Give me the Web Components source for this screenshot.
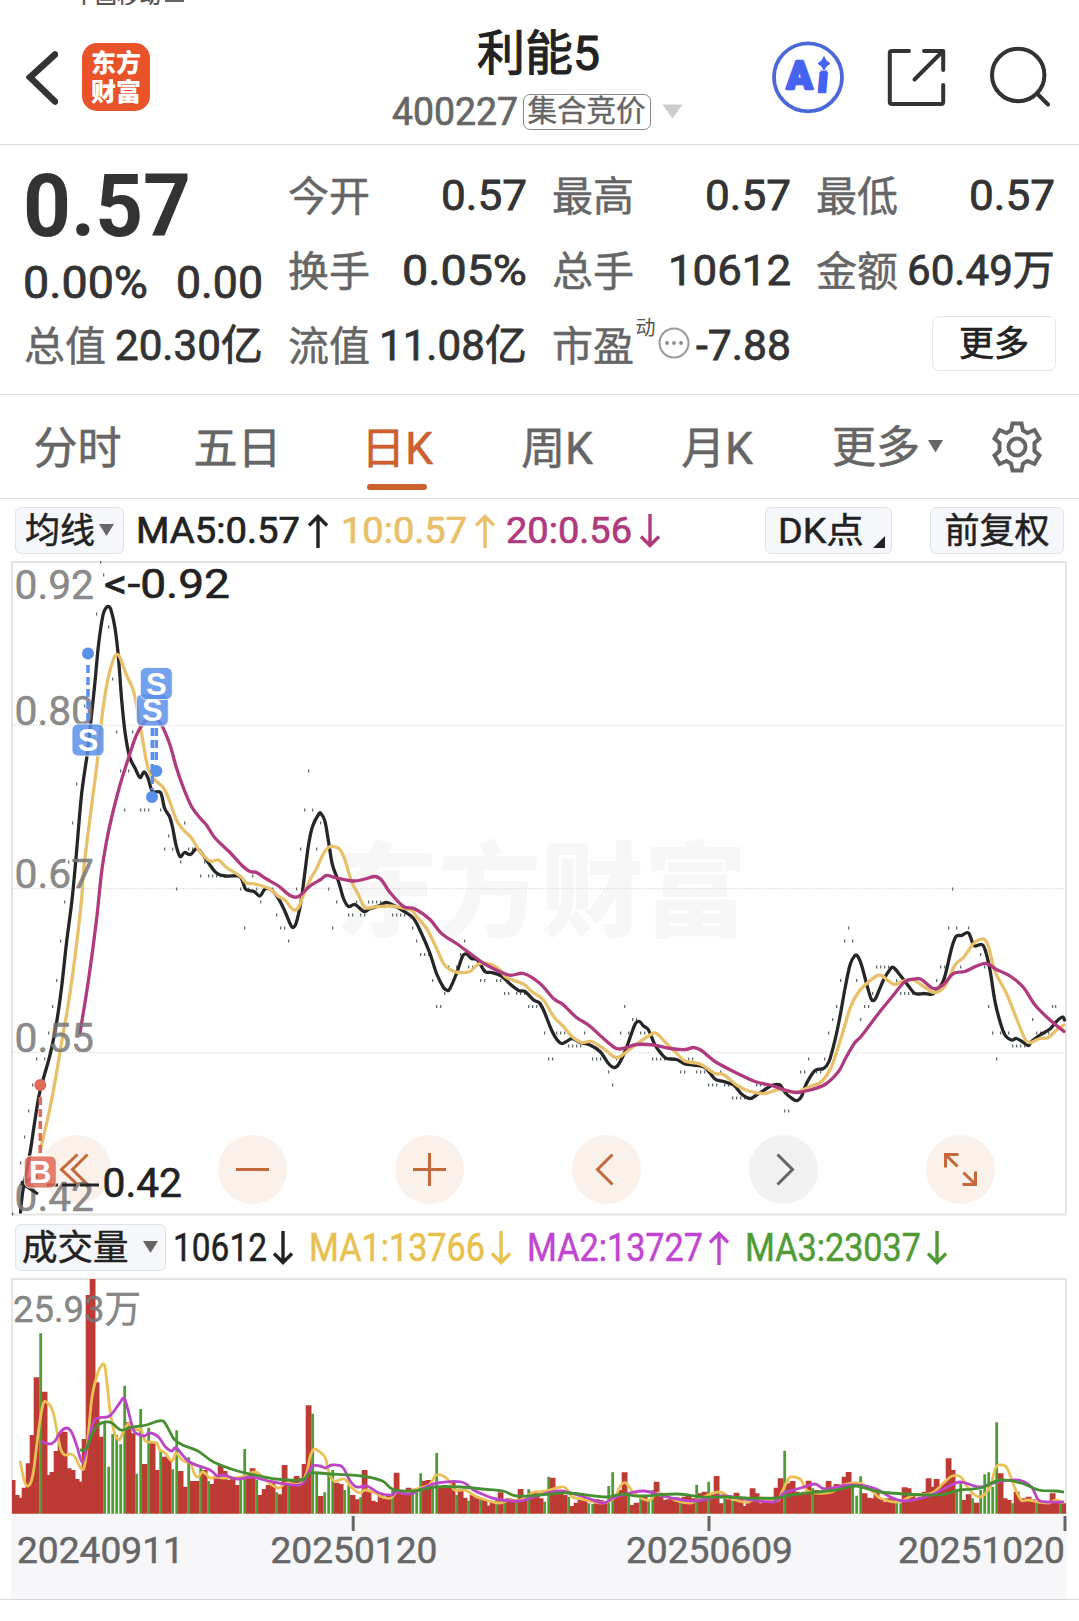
<!DOCTYPE html>
<html lang="zh-CN">
<head>
<meta charset="utf-8">
<title>利能5 400227</title>
<style>
  body {
    margin: 0;
    background: #fff;
    color: #333;
    font-family: Roboto, "Noto Sans CJK SC", sans-serif;
    font-weight: 500;
  }
</style>
</head>
<body>
<stock-page></stock-page>

<script>
// small helper: open shadow root filled from a template
function attachTemplate (host, html) {
  const template = document.createElement('template');
  template.innerHTML = html;
  host.attachShadow({ mode: 'open' });
  host.shadowRoot.appendChild(template.content.cloneNode(true));
}

// smooth path through a flat list of x y values
function curve (data) {
  const n = data.trim().split(/[\s,]+/).map(Number);
  const p = [];
  for (let i = 0; i < n.length; i += 2) p.push([n[i], n[i + 1]]);
  let d = `M${p[0][0]} ${p[0][1]}`;
  for (let i = 0; i < p.length - 1; i++) {
    const a = p[i - 1] || p[i];
    const b = p[i];
    const c = p[i + 1];
    const e = p[i + 2] || c;
    d += `C${b[0] + (c[0] - a[0]) / 6} ${b[1] + (c[1] - a[1]) / 6} ${c[0] - (e[0] - b[0]) / 6} ${c[1] - (e[1] - b[1]) / 6} ${c[0]} ${c[1]}`;
  }
  return d;
}

// <fit-text width="86"> squeezes its text to the given width
class FitText extends HTMLElement {
  constructor () {
    super();
    attachTemplate(this, `
      <style>
        :host { display: inline-block; white-space: nowrap; flex: none; vertical-align: top; }
        span { display: inline-block; vertical-align: top; transform-origin: 0 50%; }
      </style><span><slot></slot></span>`);
  }

  connectedCallback () {
    const width = Number(this.getAttribute('width'));
    const span = this.shadowRoot.querySelector('span');
    const natural = span.getBoundingClientRect().width;
    this.style.width = width + 'px';
    if (natural) span.style.transform = `scaleX(${width / natural})`;
  }
}
customElements.define('fit-text', FitText);

// <trend-arrow dir="up|down">
class TrendArrow extends HTMLElement {
  constructor () {
    super();
    const down = this.getAttribute('dir') === 'down';
    attachTemplate(this, `
      <style>
        :host { display: block; flex: none; width: 22px; height: 34px; }
        svg { display: block; ${down ? 'transform: rotate(180deg);' : ''} }
      </style>
      <svg width="22" height="34" fill="none" stroke="currentColor" stroke-width="3.4">
        <path d="M11 34V2M2 11.5L11 2.5L20 11.5"/>
      </svg>
    `);
  }
}
customElements.define('trend-arrow', TrendArrow);

// <drop-button> grey pill with slotted label
class DropButton extends HTMLElement {
  constructor () {
    super();
    attachTemplate(this, `
      <style>
        :host {
          display: flex;
          align-items: center;
          box-sizing: border-box;
          flex: none;
          height: 47px;
          border: 1px solid #e0e3e6;
          border-radius: 6px;
          background: #f5f7fa;
          color: #222;
          line-height: 45px;
          padding-top: 2px;
        }
      </style>
      <slot></slot>
    `);
  }
}
customElements.define('drop-button', DropButton);

class AppHeader extends HTMLElement {
  constructor () {
    super();
    attachTemplate(this, `
      <style>
        :host { display: block; height: 144px; border-bottom: 1px solid #d8d8d8; }
        .status { height: 5px; overflow: hidden; padding-left: 73px; font-size: 22px; line-height: 22px; color: #555; display: flex; }
        .status span { margin-top: -15px; }
        .status i { width: 19px; height: 2px; margin-left: 4px; background: #666; }
        .bar { display: grid; grid-template-columns: 360px 354px 1fr; }
        .left { display: flex; padding: 38px 0 0 26px; }
        .logo {
          box-sizing: border-box; width: 68px; height: 68px; margin-left: 24px; padding-top: 6px;
          border-radius: 15px; background: #e9532a; color: #fff;
          font-size: 25px; font-weight: 900; line-height: 29px; text-align: center;
        }
        .mid { display: flex; flex-direction: column; align-items: center; padding-top: 18px; }
        .name { font-size: 48px; line-height: 62px; color: #222; padding-left: 3px; font-weight: 400; -webkit-text-stroke: 1.1px; }
        .sub { display: flex; align-items: center; height: 53px; padding-left: 1px; color: #666; font-size: 38px; }
        .sub fit-text { font-weight: 400; -webkit-text-stroke: .7px; }
        .tag {
          box-sizing: border-box; width: 128px; height: 36px; margin: 0 10px 0 5px;
          border: 1.5px solid #888; border-radius: 7px;
          font-size: 29.5px; line-height: 33px; text-align: center; font-weight: 400; -webkit-text-stroke: .4px;
        }
        .right { display: flex; padding: 36px 0 0 58px; gap: 42px; }
        svg { display: block; flex: none; }
      </style>
      <div class="status"><span>中国移动</span><i></i></div>
      <div class="bar">
        <div class="left">
          <svg width="32" height="68" viewBox="26 43 32 68" fill="none" stroke="#333" stroke-width="6.5" stroke-linecap="round"><path d="M55 54.5L30 77.3L55 101.5"/></svg>
          <div class="logo">东方<br>财富</div>
        </div>
        <div class="mid">
          <div class="name">利能5</div>
          <div class="sub">
            <fit-text width="126">400227</fit-text><div class="tag">集合竞价</div>
            <svg width="23" height="15"><path d="M1.5 .5H21.500L11.500 14.500Z" fill="#ccc"/></svg>
          </div>
        </div>
        <div class="right">
          <svg width="72" height="73" viewBox="772 41 72 73">
            <g fill="#4563f0" stroke="#4563f0" stroke-width="2.600" stroke-linejoin="round" font-weight="900" font-family="Roboto">
              <text x="786.500" y="89" font-size="38" textLength="26" lengthAdjust="spacingAndGlyphs">A</text>
              <text x="0" y="0" font-size="36" transform="translate(817 92) skewX(-5)">i</text>
            </g>
            <path d="M813 54H836V70.500H813Z" fill="#fff"/>
            <path d="M824 56.500Q825.500 61.500 830 63.500Q825.500 65.500 824 70Q822.500 65.500 818 63.500Q822.500 61.500 824 56.500Z" fill="#4563f0" stroke="#4563f0"/>
            <circle cx="808" cy="77.300" r="34" fill="none" stroke="#4a68d8" stroke-width="3.800"/>
          </svg>
          <svg width="61" height="73" viewBox="886 41 61 73" fill="none" stroke="#333" stroke-width="4" stroke-linecap="round" stroke-linejoin="round">
            <path d="M909 51H892Q889.800 51 889.800 53V102Q889.800 104 892 104H941Q943.200 104 943.200 102V85"/>
            <path d="M924 51H943.200V70M942 52L914.500 79.500"/>
          </svg>
          <svg width="61" height="73" viewBox="989 41 61 73" fill="none" stroke="#333" stroke-width="4" stroke-linecap="round">
            <circle cx="1018.200" cy="75" r="26.200"/><path d="M1037 93.500L1048 104.500"/>
          </svg>
        </div>
      </div>
    `);
  }
}
customElements.define('app-header', AppHeader);

// <quote-cell label="今开"> label on the left, slotted value on the right
class QuoteCell extends HTMLElement {
  constructor () {
    super();
    attachTemplate(this, `
      <style>
        :host { display: flex; justify-content: space-between; align-items: center; height: 75px; font-size: 42.5px; line-height: 75px; font-weight: 400; -webkit-text-stroke: .8px; }
        .label { padding-top: 4px; font-size: 41px; color: #666; -webkit-text-stroke: .5px #666; white-space: nowrap; }
      </style>
      <span class="label">${this.getAttribute('label')}</span><slot></slot>
    `);
  }
}
customElements.define('quote-cell', QuoteCell);

class QuotePanel extends HTMLElement {
  constructor () {
    super();
    attachTemplate(this, `
      <style>
        :host {
          display: grid; grid-template-columns: repeat(4, 239px); column-gap: 25px; align-content: start;
          box-sizing: border-box; height: 250px; padding: 13px 0 0 24px; border-bottom: 1px solid #d8d8d8;
        }
        .price { grid-row: span 2; padding-top: 4px; }
        .last { font-size: 87.5px; line-height: 89px; font-weight: 700; height: 88px; margin-left: -1px; }
        .change { display: flex; justify-content: space-between; margin-top: 12px; font-size: 43.5px; line-height: 44px; margin-left: -1px; font-weight: 400; -webkit-text-stroke: .8px; }
        .hint { display: flex; align-items: center; gap: 2px; height: 75px; margin-right: 5px; color: #777; -webkit-text-stroke: 0; }
        .hint sup { font-size: 20px; line-height: 20px; margin-top: -36px; color: #555; }
        .hint svg { margin: -5px 0 0; }
        .more {
          justify-self: end; box-sizing: border-box; width: 124px; height: 55px; margin: 8px -1px 0 0;
          border: 1.5px solid #e6e6e6; border-radius: 7px; font-size: 35px; line-height: 55px; text-align: center; color: #222;
          font-weight: 400; -webkit-text-stroke: .7px;
        }
      </style>
      <div class="price">
        <div class="last"><fit-text width="168">0.57</fit-text></div>
        <div class="change"><fit-text width="125">0.00%</fit-text><fit-text width="87">0.00</fit-text></div>
      </div>
      <quote-cell label="今开"><fit-text width="86">0.57</fit-text></quote-cell>
      <quote-cell label="最高"><fit-text width="86">0.57</fit-text></quote-cell>
      <quote-cell label="最低"><fit-text width="86">0.57</fit-text></quote-cell>
      <quote-cell label="换手"><fit-text width="125">0.05%</fit-text></quote-cell>
      <quote-cell label="总手"><fit-text width="123">10612</fit-text></quote-cell>
      <quote-cell label="金额"><fit-text width="148">60.49万</fit-text></quote-cell>
      <quote-cell label="总值"><fit-text width="148">20.30亿</fit-text></quote-cell>
      <quote-cell label="流值"><fit-text width="148">11.08亿</fit-text></quote-cell>
      <quote-cell label="市盈">
        <span class="hint"><sup>动</sup>
          <svg width="32" height="32"><circle cx="16" cy="16" r="14.500" fill="none" stroke="#999" stroke-width="2"/><g fill="#888"><circle cx="9" cy="16" r="1.900"/><circle cx="16" cy="16" r="1.900"/><circle cx="23" cy="16" r="1.900"/></g></svg>
        </span>
        <fit-text width="95">-7.88</fit-text>
      </quote-cell>
      <div class="more">更多</div>
    `);
  }
}
customElements.define('quote-panel', QuotePanel);

class PeriodTabs extends HTMLElement {
  constructor () {
    super();
    attachTemplate(this, `
      <style>
        :host {
          display: flex; box-sizing: border-box; height: 104px; border-bottom: 1px solid #d8d8d8;
          font-size: 44px; line-height: 109px; color: #666; font-weight: 400; -webkit-text-stroke: .6px;
        }
        .tab { width: 160px; height: 103px; text-align: center; flex: none; box-sizing: border-box; padding-right: 5px; }
        .tab:nth-of-type(n+3) { padding-right: 6px; }
        .tab.on { color: #cc6130; position: relative; }
        .tab.on::after { content: ''; position: absolute; left: 47px; top: 89px; width: 60px; height: 6px; border-radius: 3px; background: #cc6130; }
        .more { margin-left: 32px; flex: none; display: flex; align-items: center; height: 103px; }
        .more span { padding-top: 3px; }
        .more svg { margin-left: 8px; }
        .gear { margin: 23px 0 0 45px; flex: none; }
      </style>
      <div class="tab">分时</div>
      <div class="tab">五日</div>
      <div class="tab on">日K</div>
      <div class="tab">周K</div>
      <div class="tab">月K</div>
      <div class="more"><span>更多</span><svg width="15" height="13"><path d="M0 0H15L7.500 12.500Z" fill="#666"/></svg></div>
      <svg class="gear" width="58" height="58" viewBox="-29 -29 58 58" fill="none" stroke="#666" stroke-width="4">
        <path d="M-4.500-23.500H4.500L6-16.500L10.500-14L17.500-17L22.500-8.500L17.500-4V4L22.500 8.500L17.500 17L10.500 14L6 16.500L4.500 23.500H-4.500L-6 16.500L-10.500 14L-17.500 17L-22.500 8.500L-17.500 4V-4L-22.500-8.500L-17.500-17L-10.500-14L-6-16.500Z"/>
        <circle r="8.500"/>
      </svg>
    `);
  }
}
customElements.define('period-tabs', PeriodTabs);

class MaLegend extends HTMLElement {
  constructor () {
    super();
    attachTemplate(this, `
      <style>
        :host { display: flex; align-items: center; height: 62px; padding-left: 15px; font-size: 37px; line-height: 62px; font-weight: 400; -webkit-text-stroke: .7px; }
        drop-button { font-size: 35px; font-weight: 400; -webkit-text-stroke: .5px; }
        .ma { width: 109px; padding-left: 9px; }
        .ma svg { margin: 0 0 2px 4px; }
        .dk { width: 127px; padding-left: 12px; margin-left: 104px; }
        .dk svg { align-self: flex-end; margin: 0 0 5px 9px; }
        .adj { width: 134px; margin-left: 38px; justify-content: center; }
        .item { display: flex; align-items: center; color: #222; margin-left: 12px; padding-top: 1px; }
        .item.v10 { color: #e8c06a; }
        .item.v20 { color: #b03a7e; margin-left: 10px; }
        .item trend-arrow { margin-left: 7px; }
      </style>
      <drop-button class="ma">均线<svg width="15" height="12"><path d="M0 0H15L7.500 12Z" fill="#666"/></svg></drop-button>
      <div class="item"><fit-text width="164">MA5:0.57</fit-text><trend-arrow dir="up"></trend-arrow></div>
      <div class="item v10"><fit-text width="126">10:0.57</fit-text><trend-arrow dir="up"></trend-arrow></div>
      <div class="item v20"><fit-text width="126">20:0.56</fit-text><trend-arrow dir="down"></trend-arrow></div>
      <drop-button class="dk"><fit-text width="86">DK点</fit-text><svg width="12" height="12"><path d="M12 0V12H0Z" fill="#222"/></svg></drop-button>
      <drop-button class="adj">前复权</drop-button>
    `);
  }
}
customElements.define('ma-legend', MaLegend);

// <round-tool> circle behind one chart control
class RoundTool extends HTMLElement {
  constructor () {
    super();
    attachTemplate(this, `
      <style>
        :host { display: block; width: 69px; height: 69px; border-radius: 50%; background: #faf1ea; color: #c4683a; }
        :host([muted]) { background: #f2f2f2; color: #666; }
        svg { display: block; }
      </style>
      <svg width="69" height="69" viewBox="-34.500 -34.500 69 69" fill="none" stroke="currentColor" stroke-width="3"><path d="${this.getAttribute('icon')}"/></svg>
    `);
  }
}
customElements.define('round-tool', RoundTool);

// closing price dots, one row per price level: y: x x x
const TICKS = `
562:101 575:104 614:97 627:109 679:113 706:85 732:117 133 771:121 129 309 784:77
810:125 141 145 149 161 305 313 823:73 185 321 836:169 849:165 173 189 193 301 317
862:69 181 205 876:201 209 213 217 221 225 253 889:177 241 249 257 273 297 329 953
902:65 261 337 357 369 373 377 381 915:277 349 353 361 365 393 397 401 405
928:245 281 285 333 413 849 949 957 969 941:61 289 417 465 845 853 954.500:421 425 429 461 981
967:449 457 469 473 877 881 885 889 941 945 961 985 980.500:57 433 481 485 497 501 841 857 897 937
993.500:445 505 509 517 521 525 873 901 905 909 913 1006.500:53 437 441 529 533 537 625 837 865 869 989 1053 1056
1019.500:633 637 833 861 1033 1033:49 545 557 561 565 585 621 629 641 645 829 993 1001 1005 1009 1037 1041 1045 1049
1046:569 573 577 581 1013 1017 1021 1025 1059:37 45 549 553 593 597 601 617 653 657 661 665 689 693 809 825 997
1072:609 681 685 697 701 705 721 801 805 817 821 1085:33 613 709 713 717 725 729 757 761 765
1098:733 737 741 745 1111:29 785 789 1137:25 1163:21 1214:13`;

const PRICE_MA5 = `20.5 1212 23 1190 30 1153 35 1120 40 1091 50 1055 56.500 1023 61.500 988 66.500 943 72 900 76 858 81.500 795 87.500 752
91.500 715 95 682 98.500 645 103 615 106 608 108.500 606.500 111 610 115 628 118.500 658 121.500 698 125 732 129.500 756.500 135 768 140 777.500 144 772
148 778 152.500 791.500 160.500 792.500 164.500 808 169.500 816.500 172.500 827 176 845 180 856.500 184.500 852.500 190.500 854.500 196.500 848.500 201.500 853
208.500 863 216.500 873 225 876 238.500 876 242.500 881 246 889.500 254 891.500 260 896 265 889 271.500 890 278.500 898.500 285 911.500 290 923.500
292.500 927.500 296 923.500 301 901.500 305 871.500 308.500 845 312.500 826.500 318.500 814.500 321 813.500 325 821.500 328.500 841.500 332.500 865 338.500 881.500
343.500 898.500 348.500 906.500 355 904.500 364 911.500 370 908.500 378.500 906 386 902.500 393 905 402 910 413.500 918.500 421.500 933.500 430 953.500 436.500 973.500
443.500 987.500 447.500 990.500 450 988.500 456.500 973.500 462.500 956.500 466.500 954 471.500 958.500 477.500 960 485 971.500 491.500 972.500 501.500 976 510 984
518.500 990.500 525 991.500 533.500 1000 539 1002.500 543.500 1010 551.500 1030 556.500 1039 561.500 1043.500 566.500 1041.500 572.500 1038.500 580 1042.500 590 1045
600 1051.500 608.500 1063.500 614 1067.500 618.500 1064.500 625 1051.500 631.500 1033.500 635.500 1023.500 639.500 1021.500 643.500 1026 648.500 1030 655 1045
661.500 1054 666.500 1058.500 676.500 1059.500 685 1064 693.500 1065 705 1067.500 715 1079 723.500 1081.500 733.500 1085 741.500 1094 750 1098.500 756.500 1095
766.500 1088.500 773 1085 780 1085 785 1092.500 793.500 1099.500 797.500 1100.500 801.500 1096.500 806.500 1083.500 815 1070.500 823.500 1068.500 829 1061.500 835 1040
840 1016.500 845 988.500 850 965 854.500 956 857.500 956 861.500 965 866.500 983.500 871 998.500 874 1000.500 876.500 996.500 883.500 980 890 969.500 893.500 967.500
900 975 908.500 986 915 993.500 924 993.500 933.500 993.500 942.500 982.500 946.500 970 951.500 948.500 956 936.500 961.500 935.500 966 933 969 933.500 972.500 942.500
975 946 981.500 944.500 985 949.500 990 970 995 1001.500 1000 1021.500 1005 1035 1011.500 1040 1016.500 1038.500 1023.500 1042.500 1028.500 1045.500 1031.500 1041.500
1040 1035 1050 1029 1056.500 1021.500 1062.500 1017 1064.500 1020`;

const PRICE_MA10 = `40 1152 50 1108 56.500 1073 61.500 1043 68.500 1003 75 957 81.500 900 83.500 871.500 90 818 96.500 768 100 735 103.500 705 108.500 676.500
113.500 659 116.500 654.500 120 657.500 126.500 675 132.500 688 136 702 141.500 733 146.500 762 150 773 155 780 163.500 788 168.500 798 176.500 820 183.500 830
191.500 838 200 851.500 210 861 218.500 860 226.500 867.500 240 876 246.500 883 255 884 270 889 278.500 896.500 285 900 290 906.500 294 910 298.500 907.500
303.500 895 310 880 316.500 868.500 323.500 853.500 328.500 847.500 333.500 846.500 339.500 849 345 860 351.500 881.500 358.500 895 365 907.500 373.500 907
390 906 400 907.500 411.500 910 416.500 916.500 426.500 928.500 435 945 443.500 963.500 450 969.500 458.500 972.500 470 971.500 478.500 964 490 964 500 970
506.500 977.500 523.500 984 531.500 991.500 543.500 1000 553.500 1016.500 563.500 1026.500 571.500 1036 581.500 1042.500 591.500 1041.500 603.500 1048.500
613.500 1056.500 620 1056.500 633.500 1046.500 650 1035 656.500 1033.500 666.500 1043.500 675 1051.500 685 1061 700 1064 715 1073.500 723.500 1074.500 736.500 1085
748.500 1091 765 1093.500 779 1089.500 796.500 1092 810 1086.500 821.500 1081.500 831.500 1066.500 841.500 1036.500 850 1008.500 856.500 995 865 985 876.500 976
881.500 975.500 888.500 981 895 984.500 903.500 981 913.500 980 926.500 988.500 935 992.500 945 986 955 965 963.500 957.500 973.500 943.500 980 939.500 984.500 939.500
988.500 946.500 995 971.500 1006.500 993.500 1018.500 1023.500 1025 1039 1030 1042.500 1040 1038.500 1048.500 1037.500 1056.500 1030 1064 1025`;

const PRICE_MA20 = `80 1033 88.500 980 96.500 920 101.500 873 106.500 841.500 111.500 818 120 785 129.500 755 136.500 735 145 721.500 153.500 718 161.500 725 170 745
176.500 768 183.500 788 191.500 806.500 200 818 206.500 825 215 838 230 852.500 241.500 865 250 871.500 256.500 872.500 266.500 879 278.500 886 290 895.500
298.500 896.500 310 886 320 880 326.500 875.500 336.500 878 353.500 881 365 879 375 876.500 381.500 880 390 892.500 403.500 906.500 415 909 430 919.500
441.500 933.500 456.500 943.500 473.500 956 486.500 965 508.500 975 523.500 973.500 540 983.500 553.500 998.500 563.500 1005 576.500 1017.500 588.500 1025
603.500 1038.500 616.500 1048.500 626.500 1047.500 636.500 1044.500 653.500 1045 670 1048.500 685 1049.500 693.500 1047.500 701.500 1050.500 715 1061.500
733.500 1071.500 755 1081.500 770 1085 785 1090 796.500 1092.500 810 1090 825 1084.500 838.500 1071.500 846.500 1056.500 855 1042.500 861.500 1036 878.500 1013.500
893.500 995 905 981.500 915 979 921.500 979.500 933.500 988.500 943.500 984.500 953.500 973.500 965 971.500 976.500 966 986.500 963.500 996.500 969.500 1010 976
1023.500 987.500 1035 1005 1050 1020 1064 1031.500`;

class PriceChart extends HTMLElement {
  constructor () {
    super();
    let ticks = '';
    let y = 0;
    TICKS.trim().split(/\s+/).forEach(part => {
      const [a, b] = part.split(':');
      if (b) y = Number(a);
      ticks += `M${Number(b || a) - 0.3} ${y - 1.5}v3`;
    });
    const marker = (x, my, letter, fill) => `
      <rect x="${x - 16}" y="${my - 16}" width="32" height="32" rx="6" fill="${fill}" fill-opacity=".85" stroke="#fff" stroke-opacity=".8"/>
      <text x="${x}" y="${my + 11}" text-anchor="middle" font-size="31" font-weight="700" font-family="Liberation Sans" fill="#fff">${letter}</text>`;
    const label = (ly, text) => `<text x="14.500" y="${ly}" textLength="79.500" lengthAdjust="spacingAndGlyphs">${text}</text>`;

    attachTemplate(this, `
      <style>
        :host { display: block; position: relative; height: 655px; }
        svg { display: block; position: relative; }
        .tools { position: absolute; left: 41.5px; top: 574px; display: flex; gap: 107.9px; }
      </style>
      <div class="tools">
        <round-tool icon="M1-15L-15 0L1 15M11-15L-4 0L11 15"></round-tool>
        <round-tool icon="M-16.500 0H16.500"></round-tool>
        <round-tool icon="M-16.500 0H16.500M0-16.500V16.500"></round-tool>
        <round-tool icon="M6-15L-9 0L6 15"></round-tool>
        <round-tool muted icon="M-6-15L9 0L-6 15"></round-tool>
        <round-tool icon="M-2-15H-15V-2M-15-15L-3-3M2 15H15V2M15 15L3 3"></round-tool>
      </div>
      <svg width="1079" height="655" viewBox="0 561 1079 655" font-size="40">
        <text x="335" y="929" font-size="103" font-weight="900" textLength="412" fill="#000" fill-opacity=".03">东方财富</text>
        <path d="M12 562V1214.500H1066V562Z" fill="none" stroke="#e3e3e3" stroke-width="1.800"/>
        <path d="M12 725.300H1066M12 888.700H1066M12 1052.300H1066" stroke="#d6d6d6" stroke-dasharray="1.500 1.500"/>
        <path d="${ticks}" stroke="#455" stroke-width="1.100"/>
        <g fill="none" stroke-width="3.300" stroke-linecap="round" stroke-linejoin="round">
          <path d="${curve(PRICE_MA5)}" stroke="#262626"/>
          <path d="${curve(PRICE_MA10)}" stroke="#e8c06a"/>
          <path d="${curve(PRICE_MA20)}" stroke="#b03a7e"/>
        </g>
        <g fill="#777" fill-opacity=".85" font-weight="400" stroke="#777" stroke-width=".5" stroke-opacity=".85">
          ${label(599, '0.92')}${label(725, '0.80')}${label(888, '0.67')}${label(1052, '0.55')}${label(1211, '0.42')}
        </g>
        <g fill="#5b90ea">
          <path d="M88 665V722M152.300 728V790M156.300 728V764" stroke="#5b90ea" stroke-width="3.500" stroke-dasharray="8 4"/>
          <circle cx="88" cy="653.500" r="6"/><circle cx="156.300" cy="771" r="6"/><circle cx="152" cy="797" r="6"/>
        </g>
        ${marker(88, 740, 'S', '#5b90ea')}${marker(152.3, 710, 'S', '#5b90ea')}${marker(156.3, 683.5, 'S', '#5b90ea')}
        <path d="M40.300 1097V1153" stroke="#e06a58" stroke-width="3.500" stroke-dasharray="8 4"/>
        <circle cx="40.300" cy="1085" r="6" fill="#e06a58"/>
        <path d="M21 1183L38 1194M21 1183L38 1176M47 1185H58M62 1185H76M80 1185H99" stroke="#262626" stroke-width="3" fill="none"/>
        ${marker(40.3, 1172, 'B', '#e06a58')}
        <g fill="#222" font-weight="400" stroke="#222" stroke-width=".6">
          <text x="104" y="597.500" textLength="126" lengthAdjust="spacingAndGlyphs">&lt;-0.92</text>
          <text x="102.500" y="1197" textLength="79.500" lengthAdjust="spacingAndGlyphs">0.42</text>
        </g>
      </svg>
    `);
  }
}
customElements.define('price-chart', PriceChart);

class VolumeLegend extends HTMLElement {
  constructor () {
    super();
    attachTemplate(this, `
      <style>
        :host { display: flex; align-items: center; height: 62px; padding-left: 15px; font-size: 39px; line-height: 62px; color: #222; font-weight: 400; -webkit-text-stroke: .5px; }
        drop-button { width: 151px; padding-left: 6px; font-size: 35.5px; }
        drop-button svg { margin: 0 0 2px 14px; }
        .item { display: flex; align-items: center; margin-left: 15px; padding-top: 1px; }
        .item trend-arrow { margin-left: 5px; }
      </style>
      <drop-button>成交量<svg width="15" height="12"><path d="M0 0H15L7.500 12Z" fill="#666"/></svg></drop-button>
      <div class="item" style="margin-left:7px"><fit-text width="94">10612</fit-text><trend-arrow dir="down"></trend-arrow></div>
      <div class="item" style="color:#e8c04e"><fit-text width="176">MA1:13766</fit-text><trend-arrow dir="down"></trend-arrow></div>
      <div class="item" style="color:#bf46d0"><fit-text width="176">MA2:13727</fit-text><trend-arrow dir="up"></trend-arrow></div>
      <div class="item" style="color:#509b36"><fit-text width="176">MA3:23037</fit-text><trend-arrow dir="down"></trend-arrow></div>
    `);
  }
}
customElements.define('volume-legend', VolumeLegend);

// one value per trading day, g marks a falling day
const VOLUMES = `101 56 48 78 151 236 409 541g 366 116 125 188 241 246 136 131 104 96 224 656 704 394 231 273g 141g 239g 236g 208g 384g 274 241
120g 314g 149 258g 216 131 188g 171 164 133g 250g 128 81 169g 98 98 139g 131 98g 89 111 146 128 101 106 86 104g 194g 116 136 101g 56 74 86 98 64g 58
146 91g 101 113 106 149 325 300g 121g 53 64g 121g 131g 93 89 71g 86g 56 43 49g 131 66 39 35 61 51 56 71g 123 71 61 78 61g 64g 121g 98 101 81g 182g 81
86 81 96 56g 71 48 39g 56 46 46g 41 24 36 46g 64 36g 46 41 43g 74 56 73g 66 61 46 36g 111g 108 66 71 56 51g 23 33 41 46 31g 29g 43 41 36 83g 124g 51
71 124 56g 26 33 46g 53 43g 71g 96 51 41 43 46 49 46g 51 53 46 87g 61 66 96g 61 113 31 46g 43 39g 63 43 23 31 76 61 31 36 39 41 78 106 189g 91 98 66
61 66 99 76g 71 66 66 98 71 89 81 111 125 91g 54g 112g 61 48 46 66 43 36 46 43 36g 31g 79 76 61 46 51 66 106 81 104 86 91 166 131 71g 91g 41 58 46g
33 71g 118g 124g 81g 274g 121 46 41 31g 66 41 46 51 43 36g 36 36 33 61 39 31g 31`;

const VOLUME_MA1 = `20 183 22.500 195 25 205 27.500 208 31 204 34 190 37 165 40.500 139 43.500 125 46.500 124 51 129 54.500 140 58 159 61 172 65 177 70.500 176
75 179 80 189 83.500 191 86 179 89 149 92 119 96.500 99 100.500 89 104.500 87 107 105 110 132 114.500 155 119 162 122 157 128 146 132.500 150 138 152 141 151
144.500 162 148 164 156.500 165 160 172 165 175 172 183 176 175 181 181 186 184 190.500 185 194.500 196 198 199 203 194 210 200 215 199 224 200 241 199 255 194
263.500 200 272 207 279 210 286 205 299.500 206 306.500 195 310 179 314 171 320 174 325.500 180 329 195 334 203 344.500 201 351 209 360 215 365 212 375.500 215
382 219 391 220 398 213 406.500 215 413 212 429 207 436.500 197 447.500 201 454.500 212 465 212 475 218 489 223 499.500 225 509.500 222 520 222 534 214 540 214
550 212 564 209 572.500 219 581 221 602 225 614 220 621 207 626 205 633 214 643 221 650 222 658.500 215 677.500 223 691 225 701.500 220 719 214 732.500 221
746 224 760 220 777 223 782 214 789 200 794.500 199 801 202 806.500 212 815 215 832 214 842.500 207 859.500 205 873.500 214 880 220 897.500 224 914.500 217
932 215 945.500 203 952.500 198 961 199 969.500 212 980 219 990 209 995.500 190 1000.500 187 1007 190 1014.500 209 1021 222 1028 222 1038.500 224 1049 225 1055.500 222 1064 225`;

const VOLUME_MA2 = `40.500 163 50 166 55 163 60.500 154 66.500 150 71.500 154 76.500 167 82.500 184 88 165 93 145 98 140 109.500 138 119 126 124 120 127.500 130
133.500 152 138 156 144.500 158 150 155 158.500 159 165.500 169 172 173 176.500 170 189.500 184 210 192 217 198 224 197 237.500 201 251.500 199 268.500 203
292.500 207 303 205 311.500 189 320 188 325.500 190 332 187 342.500 189 349.500 202 356.500 209 367 208 379 215 392.500 217 396 214 410 216 423.500 210
437.500 205 461.500 204 473.500 212 482 216 496 221 520 223 540 217 560.500 213 584.500 219 603.500 225 615.500 219 643 213 667 219 694.500 223 722 218
746 221 774 224 784 215 801 210 815 206 825.500 211 849.500 207 873.500 210 890.500 219 904.500 223 928.500 218 945.500 210 960 204 980 209 997 204
1018 202 1031.500 209 1038.500 222 1049 224 1064 224`;

const VOLUME_MA3 = `80 172 86 171 92.500 155 98 147 105 144 112 145 121 152 132.500 149 146.500 147 155 144 163 143 169 152 174 161 182.500 167 198 173 213.500 184
237.500 193 255 197 275.500 201 301.500 202 311.500 195 330.500 196 361.500 198 382.500 203 392.500 211 413 213 435.500 209 461.500 209 482 211 503 213 516.500 218
540 217 567.500 215 605.500 219 622.500 216 639.500 218 677.500 216 701.500 219 725.500 219 746 220 777 220 791 217 835.500 212 856.500 208 880.500 214 928.500 217
945.500 216 959.500 212 980 210 1000.500 202 1021 205 1038.500 212 1055.500 213 1064 214`;

class VolumeChart extends HTMLElement {
  constructor () {
    super();
    const base = 235.7;
    let up = '';
    let down = '';
    VOLUMES.split(/\s+/).forEach((value, i) => {
      const height = parseInt(value, 10) / 3;
      const x = 12.7 + 4 * i;
      if (value.endsWith('g')) {
        down += `M${x - 1.4} ${base}v${-height}h2.8v${height}Z`;
      } else {
        const left = Math.max(x - 3, 12);
        up += `M${left} ${base}v${-height}H${Math.min(x + 2.8, 1066)}v${height}Z`;
      }
    });
    const date = (x, text) => `<text x="${x}" y="285.300" textLength="167" lengthAdjust="spacingAndGlyphs">${text}</text>`;

    attachTemplate(this, `
      <style>
        :host { display: block; height: 321px; border-bottom: 1.5px solid #d8d8dc; }
        svg { display: block; }
        text { font-size: 37.5px; font-weight: 400; }
      </style>
      <svg width="1079" height="321" viewBox="0 0 1079 321">
        <path d="M11.500 236H1066.500V321H11.500Z" fill="#f7f7fa"/>
        <path d="M12 236V1H1066V236" fill="none" stroke="#e3e3e3" stroke-width="1.800"/>
        <path d="${up}" fill="#bd3b35"/>
        <path d="${down}" fill="#509b36"/>
        <g fill="none" stroke-width="2.800" stroke-linejoin="round">
          <path d="${curve(VOLUME_MA1)}" stroke="#eac055"/>
          <path d="${curve(VOLUME_MA2)}" stroke="#bd46c8"/>
          <path d="${curve(VOLUME_MA3)}" stroke="#469033"/>
        </g>
        <text x="13" y="43.500" textLength="128" lengthAdjust="spacingAndGlyphs" fill="#777" fill-opacity=".88" stroke="#777" stroke-width=".4">25.93万</text>
        <path d="M353.200 238V253M709 238V253M1065 238V253" stroke="#666" stroke-width="3"/>
        <g fill="#666" stroke="#666" stroke-width=".500">${date(17, '20240911')}${date(270.500, '20250120')}${date(626, '20250609')}${date(898, '20251020')}</g>
      </svg>
    `);
  }
}
customElements.define('volume-chart', VolumeChart);

class StockPage extends HTMLElement {
  constructor () {
    super();
    attachTemplate(this, `
      <style>
        :host { display: block; width: 1079px; height: 1621px; overflow: hidden; }
      </style>
      <app-header></app-header>
      <quote-panel></quote-panel>
      <period-tabs></period-tabs>
      <ma-legend></ma-legend>
      <price-chart></price-chart>
      <volume-legend></volume-legend>
      <volume-chart></volume-chart>
    `);
  }
}
customElements.define('stock-page', StockPage);
</script>
</body>
</html>
